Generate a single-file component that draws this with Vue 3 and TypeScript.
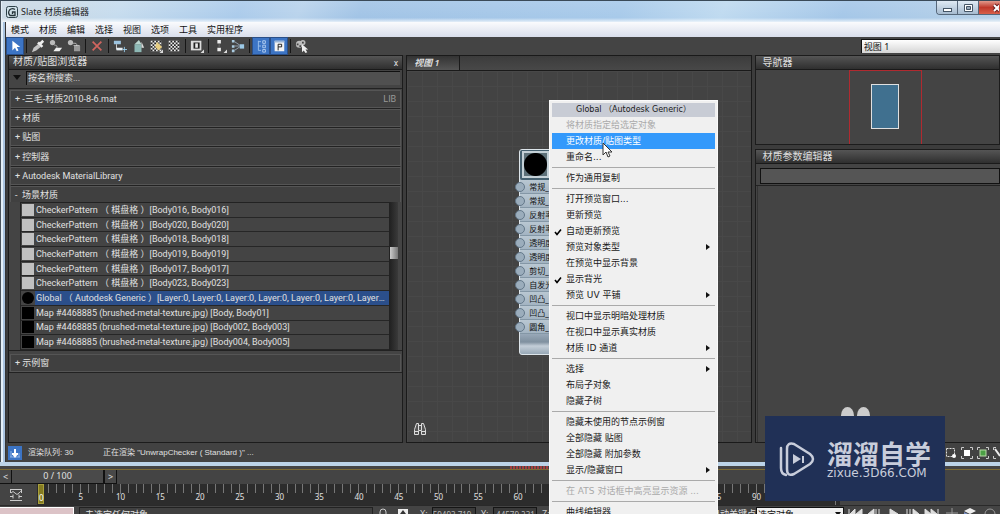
<script setup lang="ts">
import { ref } from 'vue'

interface Shape { d: string; f?: string; s?: string; w?: number }
interface Tool { name: string; shapes: Shape[]; active?: boolean; split?: boolean }

const menus = ['模式', '材质', '编辑', '选择', '视图', '选项', '工具', '实用程序']

const checker = (() => {
  let d = ''
  for (let y = 0; y < 6; y++) for (let x = 0; x < 6; x++) if ((x + y) % 2) d += `M${2 + x * 2} ${2 + y * 2}h2v2h-2z`
  return d
})()
const square = 'M2 2h12v12H2z'
const corner: Shape = { d: 'M16 12v4h-4z', f: '#ddd' }

const tools: Tool[] = [
  { name: '选择工具', active: true, split: true, shapes: [{ d: 'M5 2v11l3-3 2 4 2-1-2-4h4z', f: '#fff' }] },
  { name: '从对象拾取材质', shapes: [{ d: 'M1 15l2-5 5-4 3 3-5 4z', f: '#c4c4c4' }, { d: 'M8 4l5 5M10 6l4-4', s: '#eee', w: 3 }] },
  { name: '将材质放入场景', shapes: [{ d: 'M1 4a3 3 0 1 0 6 0a3 3 0 1 0-6 0', f: '#bbb' }, { d: 'M6 7q4 0 3 3', s: '#bbb', w: 1 }, { d: 'M8 10h7l-3 4H5z', f: '#eee' }] },
  { name: '将材质指定给选定对象', split: true, shapes: [{ d: 'M1 4a3 3 0 1 0 6 0a3 3 0 1 0-6 0', f: '#bbb' }, { d: 'M7 5q5-1 4 3', s: '#bbb', w: 1 }, { d: 'M8 8h7v6H8z', f: '#999' }, { d: 'M7 7h7l1 1H8z', f: '#ddd' }] },
  { name: '删除选定对象', split: true, shapes: [{ d: 'M3 3l10 10M13 3L3 13', s: '#d0655f', w: 2 }] },
  { name: '移动子对象', shapes: [{ d: 'M1 2h8v4H1z', f: '#9cc3df' }, { d: 'M4 6v6', s: '#ddd', w: 1 }, { d: 'M4 10h7v3H4z', f: '#e6eef4' }, { d: 'M11 12h5M13 9v6', s: '#9cd1ef', w: 1 }] },
  { name: '隐藏未使用的节点示例窗', shapes: [{ d: 'M4 6h8v9H4z', f: '#8db8b5' }, { d: 'M4 6l5-5 3 5z', f: '#b9d5ce' }, { d: 'M12 3l3 7h-3z', f: '#dcdcdc' }] },
  { name: '在视口中显示明暗处理材质', shapes: [{ d: square, f: '#eee' }, { d: checker, f: '#222' }, { d: 'M9 3l6 6-4 4-4-4z', f: '#e6cd83' }, corner] },
  { name: '在预览中显示背景', split: true, shapes: [{ d: square, f: '#eee' }, { d: checker, f: '#222' }] },
  { name: '材质 ID 通道', split: true, shapes: [{ d: 'M1 2h12v11H1z', f: '#ddd' }, { d: 'M4 4h7v7H4z', f: '#222' }, { d: 'M6 5h3v5H6z', f: '#eee' }, corner] },
  { name: '布局全部', shapes: [{ d: 'M5 1h4v4H5zM5 10h4v4H5z', f: '#eee' }, { d: 'M7 6v3', s: '#777', w: 1 }, corner] },
  { name: '布局子对象', split: true, shapes: [{ d: 'M1 1h3v3H1zM1 7h3v3H1zM1 12h3v3H1z', f: '#aacbe0' }, { d: 'M4 3l6 4M4 8h6M4 13l6-4', s: '#9ab', w: 1 }, { d: 'M10 6h5v5h-5z', f: '#9cc9e6' }] },
  { name: '材质/贴图浏览器', active: true, shapes: [{ d: 'M5 2v11M5 3h3M5 8h3M5 13h3', s: '#9fc3ee', w: 1 }, { d: 'M10 2h3v3h-3zM10 7h3v3h-3zM10 12h3v3h-3z', s: '#b8d2f2', w: 1 }] },
  { name: '参数编辑器', active: true, split: true, shapes: [{ d: 'M3 2h11v12H3z', f: '#f4f4f4' }, { d: 'M3 2h11v2H3z', f: '#9bb6d8' }, { d: 'M7 13V6h4v3H7', s: '#111', w: 1 }] },
  { name: '按材质选择', shapes: [{ d: 'M1 6a4 4 0 1 0 8 0a4 4 0 1 0-8 0M6 4a3 3 0 1 0 6 0a3 3 0 1 0-6 0', f: '#bbb' }, { d: 'M2 5h2v2H2zM5 7h2v2H5zM8 3h2v2H8z', f: '#444' }, { d: 'M8 6v9l2-2 2 3 2-1-2-3h3z', f: '#eee' }] },
]

const groups = ['-三毛-材质2010-8-6.mat', '材质', '贴图', '控制器', 'Autodesk MaterialLibrary']
const materials = [
  ...['016', '020', '018', '019', '017', '023'].map((n) => ({
    kind: 'light', text: `CheckerPattern （ 棋盘格 ）[Body${n}, Body${n}]`,
  })),
  { kind: 'ball', text: 'Global （ Autodesk Generic ）[Layer:0, Layer:0, Layer:0, Layer:0, Layer:0, Layer:0, Layer:0, Layer:0]' },
  { kind: 'dark', text: 'Map #4468885 (brushed-metal-texture.jpg) [Body, Body01]' },
  { kind: 'dark', text: 'Map #4468885 (brushed-metal-texture.jpg) [Body002, Body003]' },
  { kind: 'dark', text: 'Map #4468885 (brushed-metal-texture.jpg) [Body004, Body005]' },
]
const selected = ref(6)

const slots = ['常规_', '常规_', '反射率', '反射率', '透明度', '透明度', '剪切_', '自发光', '凹凸_', '凹凸_', '圆角_']

interface Entry { text: string; off?: boolean; hot?: boolean; check?: boolean; sub?: boolean }
const sections: Entry[][] = [
  [{ text: '将材质指定给选定对象', off: true }, { text: '更改材质/贴图类型', hot: true }, { text: '重命名...' }],
  [{ text: '作为通用复制' }],
  [
    { text: '打开预览窗口...' }, { text: '更新预览' }, { text: '自动更新预览', check: true },
    { text: '预览对象类型', sub: true }, { text: '在预览中显示背景' }, { text: '显示背光', check: true },
    { text: '预览 UV 平铺', sub: true },
  ],
  [{ text: '视口中显示明暗处理材质' }, { text: '在视口中显示真实材质' }, { text: '材质 ID 通道', sub: true }],
  [{ text: '选择', sub: true }, { text: '布局子对象' }, { text: '隐藏子树' }],
  [{ text: '隐藏未使用的节点示例窗' }, { text: '全部隐藏 贴图' }, { text: '全部隐藏 附加参数' }, { text: '显示/隐藏窗口', sub: true }],
  [{ text: '在 ATS 对话框中高亮显示资源 ...', off: true }],
  [{ text: '曲线编辑器' }],
]

const frames = Array.from({ length: 20 }, (_, i) => i * 5)
const playback = [
  'M1 2v11M7 2v11L2 7zM14 2v11L8 7z',
  'M7 2v11L1 7zM9 2v11M12 2v11',
  'M4 2v11l8-6z',
  'M2 2v11M5 2v11M8 2v11l6-6z',
  'M1 2v11l6-6zM7 2v11l6-6zM14 2v11',
]
</script>

<template>
  <div class="screen">
    <main class="window">
      <header class="titlebar">
        <svg class="app-icon" viewBox="0 0 12 12">
          <rect x="0.5" y="0.5" width="11" height="11" rx="2" fill="#cfe0e8" stroke="#2c4048" />
          <path d="M9 3.5Q6 1.5 3.5 4Q1.5 7 4 9.5H9V6H6.5V8" fill="none" stroke="#26353b" stroke-width="1.3" />
        </svg>
        <h1>Slate 材质编辑器</h1>
        <div class="caption">
          <button class="cap" aria-label="最小化"><svg viewBox="0 0 20 14"><rect x="6.5" y="7.5" width="8" height="3" fill="#fff" stroke="#456" /></svg></button>
          <button class="cap" aria-label="最大化"><svg viewBox="0 0 20 14"><path d="M6.5 3.5h8v7h-8z" fill="#fff" stroke="#456" /><path d="M8.5 5.5h4v3h-4z" fill="#9ab" stroke="#456" /></svg></button>
          <button class="cap close" aria-label="关闭"><svg viewBox="0 0 20 14"><path d="M15 4l6 6M21 4l-6 6" stroke="#6b1f1f" stroke-width="4" /><path d="M15 4l6 6M21 4l-6 6" stroke="#fff" stroke-width="2" /></svg></button>
        </div>
      </header>

      <nav class="menubar">
        <button v-for="m in menus" :key="m">{{ m }}</button>
      </nav>

      <div class="toolbar">
        <div v-for="t in tools" :key="t.name" class="slot" :class="{ split: t.split }">
          <button :class="{ active: t.active }" :aria-label="t.name">
            <svg viewBox="0 0 16 16">
              <path v-for="(p, i) in t.shapes" :key="i" :d="p.d" :fill="p.f ?? 'none'" :stroke="p.s ?? 'none'" :stroke-width="p.w" />
            </svg>
          </button>
        </div>
        <select class="view-select" aria-label="视图"><option>视图 1</option></select>
      </div>

      <div class="workspace">
        <section class="panel browser">
          <h2 class="bar">材质/贴图浏览器<button class="x" aria-label="关闭浏览器">x</button></h2>
          <div class="search">
            <span class="down"></span>
            <input type="text" placeholder="按名称搜索..." aria-label="按名称搜索" />
          </div>
          <div class="groups">
            <button v-for="(g, i) in groups" :key="g" class="group"><span>+ {{ g }}</span><em v-if="i === 0">LIB</em></button>
            <button class="group"><span>- &nbsp;场景材质</span></button>
          </div>
          <div class="list-wrap">
            <ul class="list">
              <li v-for="(m, i) in materials" :key="i" :class="{ picked: selected === i }" @click="selected = i">
                <i :class="m.kind"></i><span>{{ m.text }}</span>
              </li>
            </ul>
            <div class="scroll"><b></b></div>
          </div>
          <div class="groups last"><button class="group"><span>+ 示例窗</span></button></div>
        </section>

        <section class="view">
          <div class="tabs"><button class="tab">视图 1</button></div>
          <div class="canvas">
            <article class="node">
              <div class="preview"><i></i></div>
              <div v-for="(s, i) in slots" :key="i" class="port"><i></i>{{ s }}</div>
              <div class="foot"></div>
            </article>
            <svg class="binoculars" viewBox="0 0 14 14">
              <path d="M3.5 1.5h2v2h3v-2h2l2 6v5h-4v-4h-3v4h-4v-5z" fill="#555" stroke="#ddd" />
              <path d="M1 9.5h5M8 9.5h5M5.5 3v5M8.5 3v5" stroke="#ddd" />
            </svg>
          </div>
        </section>

        <div class="side">
          <section class="panel nav">
            <h2 class="bar">导航器</h2>
            <div class="map"><div class="extent"><i></i></div></div>
          </section>
          <section class="panel params">
            <h2 class="bar">材质参数编辑器</h2>
            <div class="name"><input type="text" aria-label="材质名称" /></div>
            <div class="rollout"></div>
          </section>
        </div>
      </div>

      <footer class="status">
        <button class="queue" aria-label="渲染队列">
          <svg viewBox="0 0 14 14"><path d="M3 5v6M11 7v4M2 11h10" stroke="#8fb4e6" /><path d="M7 3v6M4 8h6" stroke="#fff" stroke-width="2" /><path d="M4 8l3 4 3-4z" fill="#fff" /></svg>
        </button>
        <span class="count">渲染队列: 30</span>
        <span class="message">正在渲染 "UnwrapChecker ( Standard )" ...</span>
        <svg class="zoomers" viewBox="0 0 56 14">
          <path d="M2.5 2.5h8v8h-8z" fill="none" stroke="#ddd" stroke-dasharray="2 1" /><circle cx="10" cy="10" r="2" fill="#fff" />
          <g fill="none" stroke="#ccc"><path d="M17.5 4V1.5H20M26 1.5h2.5V4M28.5 10v2.5H26M20 12.5h-2.5V10M33.5 4V1.5H36M42 1.5h2.5V4M44.5 10v2.5H42M36 12.5h-2.5V10M49.5 4V1.5H52M52 12.5h-2.5V10" /></g>
          <rect x="20" y="4" width="6" height="6" fill="#fff" /><rect x="36" y="4" width="6" height="6" fill="#4ca045" stroke="#b8d8a8" />
          <path d="M51 3l5 7" stroke="#eee" stroke-width="2" />
        </svg>
      </footer>
    </main>

    <div class="time">
      <div class="marks"></div>
      <div class="slider">
        <button>&lt;</button><output>0 / 100</output><button>&gt;</button>
      </div>
    </div>

    <div class="track">
      <div class="track-head">
        <svg viewBox="0 0 14 14">
          <path d="M1 1.5h12M1 12.5h12M1.5 1v4M12.5 1v4M2 5q2-3 4 0t4 0 3-1M1 8.5h3M10 8.5h3M4 6.5v4M10 6.5v4" fill="none" stroke="#ccc" />
        </svg>
      </div>
      <div class="ruler">
        <div v-for="f in frames" :key="f" class="cell"><span :class="{ now: f === 0 }">{{ f }}</span></div>
      </div>
      <div class="ruler-end"><span>100</span></div>
    </div>

    <div class="bottom">
      <div class="listener"></div>
      <div class="prompt">未选定任何对象</div>
      <svg class="lock" viewBox="0 0 12 16"><path d="M3 8V5a3 3 0 0 1 6 0v3" fill="none" stroke="#ccc" /><path d="M2 8h8v6H2z" fill="#ccc" /></svg>
      <svg class="axis" viewBox="0 0 12 16"><path d="M1 2h10v12H1z" fill="#eee" /><path d="M6 3l3 4H3zM5 7h2v6H5z" fill="#333" /></svg>
      <label>X: <input value="59493.719" /></label>
      <label>Y: <input value="-44579.231" /></label>
      <label>Z: <input value="0.0" /></label>
      <span class="auto">自动关键点</span>
      <div class="filter">
        <select aria-label="关键点过滤"><option>选定对象</option></select><i></i>
      </div>
      <div class="play">
        <svg v-for="(d, i) in playback" :key="i" viewBox="0 0 16 16"><path :d="d" fill="#ddd" stroke="#ddd" /></svg>
      </div>
      <svg class="views" viewBox="0 0 56 16">
        <path d="M8 1v10M2 6h12" stroke="#999" /><path d="M20 4l6-3 6 3-6 3z" fill="#eee" /><path d="M20 5l6 3v6l-6-3z" fill="#7b93c8" /><circle cx="46" cy="7" r="5" fill="none" stroke="#999" />
      </svg>
    </div>

    <div class="context" role="menu">
      <h3>Global （Autodesk Generic）</h3>
      <div v-for="(s, i) in sections" :key="i" class="section">
        <button v-for="e in s" :key="e.text" role="menuitem" :disabled="e.off" :class="{ hot: e.hot }">
          <svg v-if="e.check" class="tick" viewBox="0 0 8 8"><path d="M1 4l2 2.5L7 1.5" fill="none" stroke="#000" stroke-width="1.6" /></svg>
          {{ e.text }}
          <i v-if="e.sub"></i>
        </button>
      </div>
    </div>

    <svg class="pointer" viewBox="0 0 10 16"><path d="M1 1v12l3-3 2 5 2-1-2-4h4z" fill="#fff" stroke="#333" /></svg>

    <div class="ears"><i></i><i></i></div>
    <aside class="brand">
      <svg viewBox="0 0 36 36">
        <path d="M2 7v20q0 6 5 7" fill="none" stroke="#c8cddb" stroke-width="2.5" stroke-linecap="round" />
        <path d="M8 8q0-7 7-5l16 10q6 5 0 10L15 33q-7 3-7-5z" fill="none" stroke="#c8cddb" stroke-width="2.5" stroke-linejoin="round" />
        <path d="M14 13l8 5-8 5z" fill="#c8cddb" /><path d="M24 15v7" stroke="#c8cddb" stroke-width="2" />
      </svg>
      <div><strong>溜溜自学</strong><span>zixue.3D66.COM</span></div>
    </aside>
  </div>
</template>

<style>
body { margin: 0; background: #444; overflow: hidden; }
</style>

<style scoped>
* { box-sizing: border-box; }
.screen {
  position: relative; display: flex; flex-direction: column; height: 100vh; overflow: hidden;
  background: #444; color: #e0e0e0; font: 9px/14px "Noto Sans", "Noto Sans CJK SC", sans-serif;
}
button, input, select { font: inherit; color: inherit; border: 0; padding: 0; margin: 0; background: none; border-radius: 0; }
h1, h2, h3, ul { margin: 0; padding: 0; font-weight: 400; list-style: none; }
svg { display: block; }

.window {
  flex: 1; min-height: 0; display: flex; flex-direction: column; position: relative;
  padding-left: 6px; border-top: 1px solid #3a4a58; border-bottom: 4px solid #bcd3e8;
  background: linear-gradient(to right, #48525c 0 1px, #e4eff8 1px 3px, #a9c3df 3px 5px, #333 5px 6px);
}
.titlebar {
  flex: none; display: flex; align-items: center; height: 21px; margin-left: -4px; padding-left: 4px;
  color: #222; background:
    linear-gradient(to bottom, rgba(255,255,255,.1), rgba(255,255,255,0) 80%, rgba(255,255,255,.7)),
    linear-gradient(115deg, #cbdae6 0 5%, #c6dcee 12%, #abcbeb 24%, #b9d3ec 30%, #a2c4e6 36%, #a8caea 62%, #bfdaf0 72%, #a5c7e8 84%, #b7d1e8);
}
.app-icon { width: 12px; height: 12px; margin-right: 3px; }
.titlebar h1 { font-size: 9px; line-height: 14px; }
.caption { margin-left: auto; align-self: flex-start; display: flex; height: 14px; overflow: hidden; border-left: 1px solid #56677a; border-bottom: 1px solid #56677a; border-radius: 0 0 0 4px; }
.cap { width: 21px; border-right: 1px solid #56677a; background: linear-gradient(#dfeaf4, #a6bbd0); }
.cap svg { width: 20px; height: 14px; }
.cap.close { border: 0; background: linear-gradient(#e29a8c, #c0392b 50%, #d8604a); overflow: hidden; }
.menubar {
  flex: none; display: flex; gap: 10px; align-items: center; height: 15px; padding-left: 5px; color: #111;
  background: linear-gradient(#fafbfd, #d9deeb);
}
.toolbar { flex: none; display: flex; align-items: center; height: 18px; background: #444; }
.slot { display: flex; height: 16px; padding: 0 1px; }
.slot.split::after { content: ""; width: 1px; height: 14px; margin: 1px 1px 1px 3px; background: #161616; }
.slot button { width: 16px; height: 16px; display: grid; place-items: center; }
.slot svg { width: 14px; height: 14px; }
.slot .active { background: #3c74c4; outline: 1px solid #2a4f88; }
.view-select { flex: none; width: 14%; height: 14px; margin-left: auto; padding: 0 2px; appearance: none; color: #111; background: linear-gradient(#fff, #d5d5d5); border-top: 1px solid #111; border-left: 1px solid #111; }

.workspace { flex: 1; min-height: 0; display: grid; grid-template-columns: minmax(0, 396fr) minmax(0, 347fr) minmax(0, 245fr); gap: 3px; padding-left: 2px; background: #3c3c3c; }
.panel { display: flex; flex-direction: column; background: #444; border: 1px solid #1c1c1c; min-height: 0; }
.browser { font-family: Roboto, "Noto Sans CJK SC", sans-serif; }
.bar { flex: none; display: flex; height: 14px; padding: 0 4px; font-size: 10px; line-height: 12px; color: #ddd; background: linear-gradient(#555, #2f2f2f); border-bottom: 1px solid #1a1a1a; }
.bar .x { margin-left: auto; line-height: 12px; font-size: 9px; }
.search { flex: none; display: flex; align-items: center; height: 19px; padding: 1px 2px 4px 4px; border-bottom: 1px solid #222; }
.down { border: 4px solid transparent; border-top: 5px solid #111; border-bottom: 0; margin-right: 5px; }
.search input { flex: 1; min-width: 0; height: 14px; padding-left: 1px; background: #505050; border-left: 1px solid #111; border-top: 1px solid #111; }
.search input::placeholder { color: #ddd; opacity: 1; }
.groups { flex: none; display: grid; grid-auto-rows: 1fr; height: 115px; }
.groups.last { height: 20px; border-bottom: 1px solid #222; }
.group { position: relative; display: flex; justify-content: space-between; align-items: center; margin: 1px 1px 0; padding: 0 4px; border: 1px solid #555; text-align: left; background: #404040; box-shadow: 0 2px 0 -1px #222; white-space: nowrap; }
.group em { font-style: normal; color: #999; }
.list-wrap { flex: none; display: flex; height: 149px; margin-top: -2px; padding-left: 11px; margin-bottom: 2px; border-bottom: 1px solid #222; position: relative; background: #444; }
.list { flex: 1; min-width: 0; display: grid; grid-auto-rows: 1fr; border: 1px solid #222; border-bottom: 0; }
.list li { display: flex; align-items: center; min-width: 0; overflow: hidden; border-bottom: 1px solid #262626; }
.list i { flex: none; width: 12px; height: 12px; margin: 0 2px 0 1px; }
.list span { flex: 1; min-width: 0; overflow: hidden; white-space: nowrap; text-overflow: ellipsis; margin-right: 4px; }
.list .light { background: #c0c0c0; }
.list .dark { background: #000; }
.list .ball { background: #000; border-radius: 50%; }
.list .picked { background: linear-gradient(to right, #444 14px, #2b4f8b 14px); }
.scroll { width: 8px; background: linear-gradient(to right, #222, #3a3a3a); padding-top: 45px; margin-right: 4px; }
.scroll b { display: block; height: 12px; background: linear-gradient(to right, #ccc, #777); }

.view { min-height: 0; display: flex; flex-direction: column; border: 1px solid #1a1a1a; background: #444; }
.tabs { flex: none; height: 15px; border-bottom: 1px solid #1a1a1a; background: linear-gradient(#3c3c3c, #484848); }
.tab { height: 14px; width: 53px; padding-left: 7px; text-align: left; font-style: italic; font-weight: 600; color: #ddd; background: linear-gradient(#333, #555); border-right: 1px solid #1a1a1a; }
.canvas {
  flex: 1; min-height: 0; position: relative; overflow: hidden; background-color: #434343; background-size: 15px 15px;
  background-image: linear-gradient(#484848 1px, transparent 1px), linear-gradient(to right, #484848 1px, transparent 1px);
}
.node { position: absolute; left: 112px; top: 78px; width: 110px; border: 1px solid #dde5ea; border-radius: 3px; background: #a9b9c7; color: #111; }
.preview { height: 30px; padding: 1px; background: #45606f; border-radius: 2px; }
.preview i { display: block; width: 27px; height: 27px; margin-left: 1px; border: 2px solid #c4d0d6; background: radial-gradient(circle, #000 0 11px, #5d7078 12px); }
.port { position: relative; height: 14px; line-height: 14px; padding-left: 9px; font-size: 8px; border-bottom: 1px solid #8497a6; white-space: nowrap; background: linear-gradient(#b9c7d2, #a3b4c2); }
.port i { position: absolute; left: -5px; top: 2px; width: 10px; height: 10px; border-radius: 50%; background: #9badbc; border: 1px solid #64788a; }
.foot { height: 20px; background: linear-gradient(#98a8b8, #7f909f 40%, #c3ced8 60%, #97a8b6); border-radius: 0 0 3px 3px; }
.binoculars { position: absolute; left: 6px; bottom: 6px; width: 14px; height: 14px; }

.side { min-width: 0; min-height: 0; display: flex; flex-direction: column; gap: 4px; }
.side .bar { padding-left: 6px; }
.map { height: 74px; padding-left: 38%; }
.extent { width: 73px; height: 74px; border: 1px solid #b02a30; border-bottom: 0; padding: 13px 0 0 21px; }
.extent i { display: block; width: 28px; height: 45px; background: #40708f; border: 1px solid #e0e0e0; }
.params { flex: 1; border-right: 0; }
.name { height: 22px; padding: 4px 0 2px 4px; border-bottom: 1px solid #222; }
.name input { display: block; width: 100%; height: 16px; background: #555; border: 1px solid #111; }
.rollout { flex: 1; margin-left: 1px; border-left: 1px solid #333; }

.status { flex: none; display: flex; align-items: center; height: 19px; padding-left: 2px; background: #424242; white-space: nowrap; font: 8px/14px "Liberation Sans", "Noto Sans CJK SC", sans-serif; }
.queue { width: 14px; height: 14px; background: #3c74c4; }
.count { width: 75px; margin-left: 6px; }
.zoomers { width: 56px; height: 14px; margin-left: auto; flex: none; }

.time { flex: none; height: 18px; background: #444; }
.marks { height: 3px; margin-left: 51%; width: 20%; background: repeating-linear-gradient(to right, #a34040 0 2px, #444 2px 3px); }
.slider { display: flex; height: 15px; border-top: 1px solid #7c6a35; font-size: 9px; line-height: 12px; }
.slider button { width: 12px; background: #484848; border-right: 1px solid #111; border-bottom: 1px solid #111; }
.slider output { width: 93px; text-align: center; border-right: 2px solid #111; border-bottom: 1px solid #111; background: #4a4a4a; }
.track { flex: none; display: flex; height: 21px; background: #2c2c2c; }
.track-head { width: 37px; display: grid; place-items: center; padding-right: 5px; background: #444; margin-right: 3px; }
.track-head svg { width: 14px; height: 14px; }
.ruler { flex: none; width: 79.5%; display: flex; }
.cell {
  flex: 1; min-width: 0; padding-top: 7px;
  background: repeating-linear-gradient(to right, #777 0 1px, transparent 1px 20%) top / 100% 9px no-repeat,
    linear-gradient(to right, #777 1px, transparent 1px) top / 100% 10px no-repeat;
}
.cell span { display: block; width: 20px; margin-left: -9px; text-align: center; font-size: 8px; line-height: 12px; }
.cell .now { width: 6px; height: 20px; margin: -7px 0 0 -2px; padding-top: 8px; background: #857c22; border: 1px solid #a9a03c; color: #fff; line-height: 10px; }
.ruler-end { flex: 1; padding-top: 7px; font-size: 8px; background: linear-gradient(to right, #777 1px, #2c2c2c 1px 3%, #444 3%); }
.ruler-end span { display: block; margin-left: -7px; line-height: 12px; }

.bottom { flex: none; display: flex; align-items: stretch; height: 18px; margin-bottom: -9px; padding-top: 1px; border-top: 1px solid #2a2a2a; white-space: nowrap; }
.listener { width: 74px; margin-right: 5px; background: #dcc3c7; border-top: 1px solid #fff; border-right: 1px solid #fff; }
.prompt { width: 294px; padding-left: 5px; border: 1px solid #222; background: #404040; }
.lock { width: 12px; height: 16px; margin-left: 4px; }
.axis { width: 12px; height: 16px; margin: 0 11px 0 8px; }
.bottom label { display: flex; width: 61px; color: #ccc; gap: 4px; }
.bottom input { width: 44px; border: 1px solid #151515; background: #3a3a3a; color: #bbb; font-size: 8px; }
.auto { margin-left: auto; width: 45px; }
.filter { position: relative; width: 88px; }
.filter select { display: block; width: 100%; height: 16px; padding-left: 1px; color: #111; background: #f0f0f0; border: 1px solid #111; appearance: none; }
.filter i { position: absolute; right: 3px; top: 5px; border: 3px solid transparent; border-top: 4px solid #111; border-bottom: 0; }
.play { display: flex; gap: 3px; margin: 0 4px; }
.play svg { width: 16px; height: 16px; }
.views { width: 56px; height: 16px; }

.context { position: absolute; left: 549px; top: 100px; width: 169px; padding: 2px; border: 1px solid #fafafa; background: #f0f0f0; color: #1a1a1a; font-family: "DejaVu Sans", "Noto Sans CJK SC", sans-serif; }
.context h3 { height: 14px; font-size: 8px; line-height: 13px; text-align: center; background: #c8ccd5; }
.section + .section { border-top: 1px solid #aaa; margin-top: 2px; padding-top: 2px; }
.context button { position: relative; display: block; width: 100%; height: 16px; padding-left: 14px; font-size: 9px; line-height: 15px; text-align: left; white-space: nowrap; }
.context button:disabled { color: #aaa; }
.context .hot { background: #3399fb; color: #fff; }
.context button i { position: absolute; right: 5px; top: 5px; border: 3px solid transparent; border-left: 4px solid #111; border-right: 0; }
.tick { position: absolute; left: 2px; top: 5px; width: 8px; height: 8px; }
.pointer { position: absolute; left: 602px; top: 142px; width: 10px; height: 16px; }

.ears { position: absolute; left: 841px; bottom: 90px; display: flex; gap: 3px; }
.ears i { width: 13px; height: 17px; border-radius: 50%; background: #ccc; }
.brand { position: absolute; left: 765px; bottom: 13px; width: 180px; height: 85px; display: flex; align-items: center; gap: 12px; padding-left: 14px; background: #203056; color: #c8cddb; }
.brand svg { width: 36px; height: 36px; }
.brand strong { display: block; font: 700 26px/28px "Noto Sans CJK SC", sans-serif; }
.brand span { display: block; font: 12px/12px "DejaVu Sans", sans-serif; }
</style>
